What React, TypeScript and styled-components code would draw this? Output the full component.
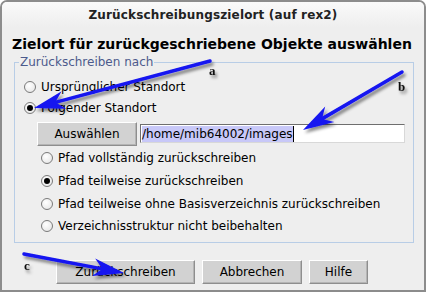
import React from "react";
import styled, { createGlobalStyle } from "styled-components";

const Global = createGlobalStyle`
  html, body { margin: 0; padding: 0; background: #ffffff; }
  body { font-family: "DejaVu Sans", "Liberation Sans", sans-serif; }
  * { box-sizing: border-box; }
`;

const Window = styled.div`
  position: relative;
  width: 426px;
  height: 292px;
  border: 2px solid #8c8c8c;
  border-radius: 7px 7px 0 0;
  background: #eeeeee;
  display: flex;
  flex-direction: column;
  overflow: hidden;
`;

const TitleBar = styled.div`
  height: 25px;
  display: flex;
  align-items: center;
  justify-content: center;
  background: linear-gradient(#fafafa, #eeeeee);
  font-weight: bold;
  font-size: 12px;
  color: #222;
  letter-spacing: 0.15px;
`;

const Heading = styled.div`
  margin: 8px 0 0 10px;
  font-weight: bold;
  font-size: 14px;
  color: #000;
  line-height: 18px;
`;

const Group = styled.fieldset`
  margin: 2px 10px 0 12px;
  padding: 7px 0 7px 9px;
  border: 1px solid #b8cde6;
  height: 188px;
  display: flex;
  flex-direction: column;
`;

const Legend = styled.legend`
  padding: 0 1px;
  margin-left: -5px;
  font-size: 12px;
  color: #4c5a8c;
`;

const RadioRow = styled.label<{ $indent?: boolean }>`
  display: flex;
  align-items: center;
  height: ${(p) => (p.$indent ? "22.7px" : "21.5px")};
  gap: 5px;
  padding-left: ${(p) => (p.$indent ? "17px" : "0")};
  font-size: 12px;
  color: #000;
`;

const RadioDot = styled.span<{ $checked?: boolean }>`
  position: relative;
  width: 12px;
  height: 12px;
  border-radius: 50%;
  border: 1px solid #7a7a7a;
  background: radial-gradient(circle at 40% 35%, #ffffff, #e2e2e2);
  flex: none;
  &::after {
    content: "";
    display: ${(p) => (p.$checked ? "block" : "none")};
    position: absolute;
    left: 2px;
    top: 2px;
    width: 6px;
    height: 6px;
    border-radius: 50%;
    background: #000;
  }
`;

const PathRow = styled.div`
  display: flex;
  align-items: center;
  gap: 3px;
  padding-left: 13px;
  height: 27px;
  margin-top: 1px;
`;

const Button = styled.button<{ $w: number }>`
  width: ${(p) => p.$w}px;
  height: 24px;
  padding: 0;
  background: #d2d2d2;
  border: 1px solid;
  border-color: #ffffff #8e8e8e #8e8e8e #ffffff;
  box-shadow: inset -1px -1px 0 #b4b4b4;
  font-family: "DejaVu Sans", "Liberation Sans", sans-serif;
  font-size: 12px;
  color: #000;
`;

const TextField = styled.div`
  width: 265px;
  height: 19px;
  background: #fff;
  border-top: 1px solid #6e6e6e;
  border-left: 1px solid #6e6e6e;
  border-right: 1px solid #d8d8d8;
  border-bottom: 1px solid #d8d8d8;
  display: flex;
  align-items: center;
  padding-left: 1px;
  font-size: 12px;
`;

const Selected = styled.span`
  background: #c8c8f8;
  color: #000;
  border-right: 1px solid #000;
  line-height: 16px;
`;

const ButtonBar = styled.div`
  display: flex;
  gap: 7px;
  margin: 17px 0 0 54px;
`;

const Overlay = styled.svg`
  position: absolute;
  left: -2px;
  top: -2px;
  pointer-events: none;
`;

const Letter = styled.text`
  font-family: "Liberation Serif", serif;
  font-weight: bold;
  font-size: 13px;
  fill: #111;
`;

type Arrow = { sx: number; sy: number; tx: number; ty: number };
const arrows: Arrow[] = [
  { sx: 210, sy: 61, tx: 34, ty: 108 },
  { sx: 402, sy: 72, tx: 303, ty: 130 },
  { sx: 24, sy: 254, tx: 124, ty: 273 },
];

function arrowShape(a: Arrow) {
  const dx = a.tx - a.sx;
  const dy = a.ty - a.sy;
  const len = Math.hypot(dx, dy);
  const ux = dx / len;
  const uy = dy / len;
  const nx = -uy;
  const ny = ux;
  const L = 31;
  const W = 9;
  const notch = 9;
  const bx = a.tx - ux * L;
  const by = a.ty - uy * L;
  const mx = a.tx - ux * (L - notch);
  const my = a.ty - uy * (L - notch);
  const pts = [
    [a.tx, a.ty],
    [bx + nx * W, by + ny * W],
    [mx, my],
    [bx - nx * W, by - ny * W],
  ]
    .map((p) => p.map((v) => v.toFixed(1)).join(","))
    .join(" ");
  return { pts, mx, my };
}

export default function App() {
  return (
    <>
      <Global />
      <Window>
        <TitleBar>Zurückschreibungszielort (auf rex2)</TitleBar>
        <Heading>Zielort für zurückgeschriebene Objekte auswählen</Heading>
        <Group>
          <Legend>Zurückschreiben nach</Legend>
          <RadioRow>
            <RadioDot />
            Ursprünglicher Standort
          </RadioRow>
          <RadioRow>
            <RadioDot $checked />
            Folgender Standort
          </RadioRow>
          <PathRow>
            <Button $w={100}>Auswählen</Button>
            <TextField>
              <Selected>/home/mib64002/images</Selected>
            </TextField>
          </PathRow>
          <RadioRow $indent>
            <RadioDot />
            Pfad vollständig zurückschreiben
          </RadioRow>
          <RadioRow $indent>
            <RadioDot $checked />
            Pfad teilweise zurückschreiben
          </RadioRow>
          <RadioRow $indent>
            <RadioDot />
            Pfad teilweise ohne Basisverzeichnis zurückschreiben
          </RadioRow>
          <RadioRow $indent>
            <RadioDot />
            Verzeichnisstruktur nicht beibehalten
          </RadioRow>
        </Group>
        <ButtonBar>
          <Button $w={139}>Zurückschreiben</Button>
          <Button $w={100}>Abbrechen</Button>
          <Button $w={59}>Hilfe</Button>
        </ButtonBar>
        <Overlay width="426" height="292" viewBox="0 0 426 292">
          <defs>
            <filter id="sh" x="-20%" y="-50%" width="140%" height="200%">
              <feDropShadow dx="2" dy="3" stdDeviation="1.8" floodColor="#000" floodOpacity="0.45" />
            </filter>
          </defs>
          {arrows.map((a, i) => {
            const s = arrowShape(a);
            return (
              <g key={i} filter="url(#sh)">
                <line x1={a.sx} y1={a.sy} x2={s.mx} y2={s.my} stroke="#1414f0" strokeWidth={3.5} strokeLinecap="round" />
                <polygon points={s.pts} fill="#1414f0" />
              </g>
            );
          })}
          <g filter="url(#sh)">
            <Letter x={209} y={75}>a</Letter>
            <Letter x={398} y={91}>b</Letter>
            <Letter x={24} y={270}>c</Letter>
          </g>
        </Overlay>
      </Window>
    </>
  );
}
